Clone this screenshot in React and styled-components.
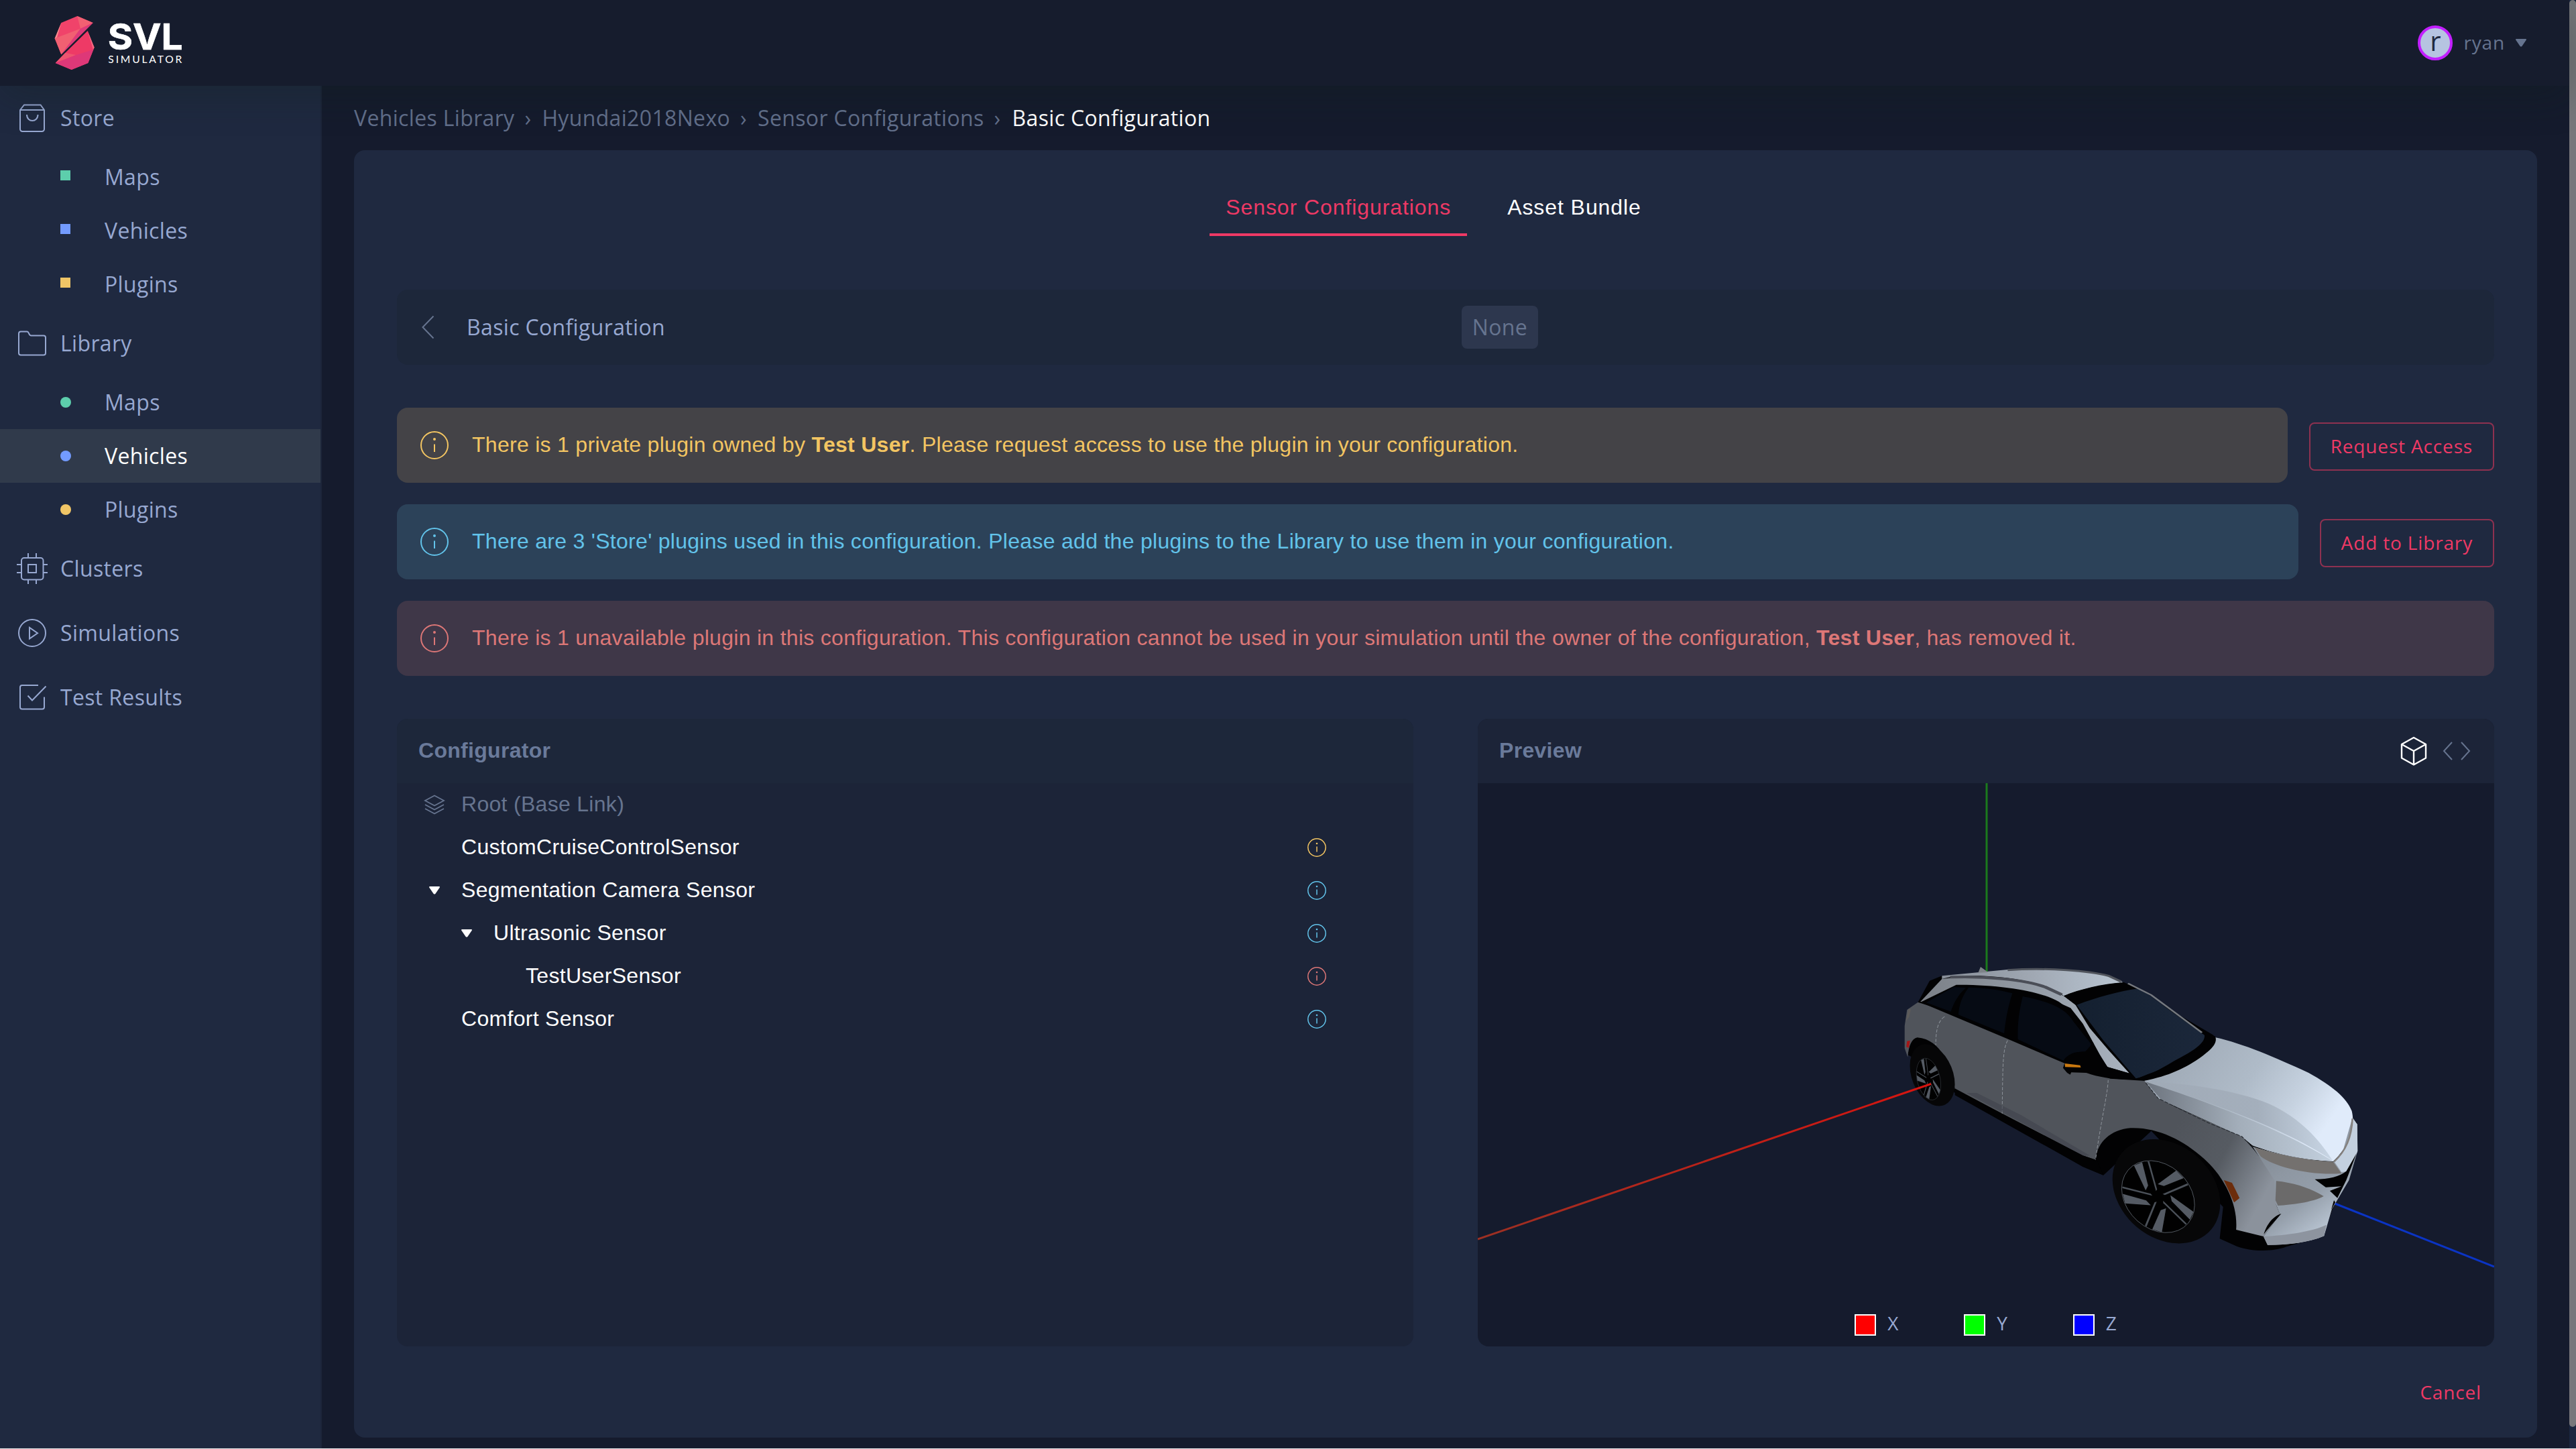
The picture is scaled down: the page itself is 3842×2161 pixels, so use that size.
import React from "react";
import styled, { createGlobalStyle, css } from "styled-components";

const color = {
  page: "#151b2d",
  surface: "#1f2940",
  sunken: "#1c2438",
  bar: "#1d273a",
  text: "#97a8d1",
  muted: "#66748f",
  accent: "#ee3965",
  green: "#5dceac",
  blue: "#739bff",
  yellow: "#f0c566",
  warning: "#f3c562",
  info: "#62c3ea",
  danger: "#dd7777",
};

const sans = `"Open Sans", "Noto Sans", sans-serif`;
const helvetica = `"Liberation Sans", Arial, sans-serif`;

const GlobalStyle = createGlobalStyle`
  *, *::before, *::after { box-sizing: border-box; }
  body {
    margin: 0;
    background: ${color.page};
    color: ${color.text};
    font-family: ${sans};
    font-size: 32px;
    letter-spacing: 0.34px;
    overflow: hidden;
  }
  button {
    font: inherit;
    letter-spacing: inherit;
    color: inherit;
    background: none;
    border: 0;
    padding: 0;
  }
  svg { display: block; flex: none; }
`;

const Window = styled.div`
  display: grid;
  grid-template-columns: 1fr 10px;
  height: 2161px;
  border-bottom: 1px solid #e8e9ec;
`;

const Page = styled.div`
  display: grid;
  grid-template-rows: 128px 1fr;
`;

const Scrollbar = styled.div`
  background: #1b2640;
`;

const Thumb = styled.div`
  height: 2128px;
  border-radius: 5px;
  background: #77777b;
`;

const Header = styled.header`
  position: relative;
  z-index: 1;
  display: flex;
  align-items: center;
  justify-content: space-between;
  padding: 0 64px 0 60px;
  background: #161c2d;
  box-shadow: 0 16px 56px rgba(16, 32, 24, 0.28);
`;

const UserMenu = styled.button`
  display: flex;
  align-items: center;
  gap: 16px;
  font-size: 28px;
  letter-spacing: 0.84px;
  color: ${color.muted};
`;

const UserName = styled.span`
  padding-bottom: 2px;
`;

const Avatar = styled.span`
  display: flex;
  align-items: center;
  justify-content: center;
  width: 52px;
  height: 52px;
  padding-bottom: 7px;
  border: 4px solid #c21fff;
  border-radius: 50%;
  background: #b6c4e1;
  color: #1f2940;
  font-size: 40px;
  letter-spacing: 0;
  line-height: 1;
`;

const Body = styled.div`
  display: grid;
  grid-template-columns: 480px 1fr;
`;

const Sidebar = styled.nav`
  display: flex;
  flex-direction: column;
  background: ${color.surface};
  border-right: 2px solid #1c2539;
`;

const ItemLabel = styled.span`
  padding-bottom: 1px;
`;

const Section = styled.a`
  display: flex;
  align-items: center;
  gap: 18px;
  height: 96px;
  padding-left: 24px;
`;

const SubItem = styled.a`
  display: flex;
  align-items: center;
  gap: 50px;
  height: 80px;
  padding-left: 90px;
  ${(p) =>
    p.$active &&
    css`
      background: #303a4b;
      color: #fff;
    `}
`;

const Bullet = styled.i`
  width: 16px;
  height: 16px;
  background: ${(p) => p.$color};
  ${(p) =>
    p.$round
      ? css`
          border-radius: 50%;
        `
      : css`
          border-right: 1px solid ${color.surface};
          margin-bottom: 5px;
          height: 15px;
        `}
`;

const Main = styled.main`
  padding: 0 48px;
`;

const Breadcrumbs = styled.div`
  display: flex;
  align-items: center;
  height: 96px;
  padding-bottom: 1px;
  color: #626f8b;
`;

const Separator = styled.span`
  margin: 0 16px 0 15px;
`;

const Current = styled.span`
  margin-left: 1px;
  color: #fff;
`;

const Card = styled.section`
  height: 1920px;
  padding: 48px 64px 32px;
  border-radius: 16px;
  background: ${color.surface};
`;

const Tabs = styled.div`
  display: flex;
  justify-content: center;
  font-family: ${helvetica};
  letter-spacing: 0.92px;
`;

const Tab = styled.button`
  height: 80px;
  margin-right: 36px;
  padding: 0 24px 2px;
  line-height: 74px;
  border-bottom: 4px solid ${(p) => (p.$active ? color.accent : "transparent")};
  color: ${(p) => (p.$active ? color.accent : "#fff")};
`;

const TitleBar = styled.div`
  display: grid;
  grid-template-columns: 104px 1fr 1540px;
  align-items: center;
  height: 112px;
  margin-top: 80px;
  border-radius: 16px;
  background: ${color.bar};
`;

const BackButton = styled.button`
  padding-left: 24px;
`;

const Tag = styled.span`
  justify-self: start;
  width: 114px;
  height: 64px;
  border-radius: 8px;
  background: #2d374e;
  color: ${color.muted};
  line-height: 63px;
  text-align: center;
`;

const Alerts = styled.div`
  display: grid;
  gap: 32px;
  margin: 64px 0;
`;

const AlertRow = styled.div`
  display: flex;
  align-items: center;
  gap: 32px;
`;

const tones = {
  warning: { fg: color.warning, bg: "#444347" },
  info: { fg: color.info, bg: "#2c4259" },
  danger: { fg: color.danger, bg: "#3f3748" },
};

const AlertBox = styled.div`
  display: flex;
  flex: 1;
  align-items: center;
  gap: 32px;
  height: 112px;
  padding: 0 32px;
  border-radius: 16px;
  background: ${(p) => tones[p.$tone].bg};
  color: ${(p) => tones[p.$tone].fg};
`;

const AlertText = styled.p`
  margin: 0;
  padding-bottom: 2px;
  font-family: ${helvetica};
  letter-spacing: 0.29px;
`;

const OutlineButton = styled.button`
  height: 72px;
  margin-top: 4px;
  padding: 0 30px 2px;
  border: 2px solid #8e3150;
  border-radius: 8px;
  color: ${color.accent};
  font-size: 28px;
  letter-spacing: 0.84px;
`;

const Columns = styled.div`
  display: grid;
  grid-template-columns: 1fr 1fr;
  gap: 96px;
  height: 936px;
  font-family: ${helvetica};
  letter-spacing: 0.3px;
`;

const Panel = styled.section`
  display: grid;
  grid-template-rows: 96px 1fr;
  min-height: 0;
  border-radius: 16px;
  overflow: hidden;
  background: ${(p) => (p.$deep ? color.page : color.sunken)};
`;

const PanelHeader = styled.header`
  display: flex;
  align-items: center;
  gap: 16px;
  padding: 0 32px;
  background: ${(p) => (p.$deep ? color.sunken : color.bar)};
`;

const PanelTitle = styled.h2`
  flex: 1;
  margin: 0;
  padding-bottom: 2px;
  font-size: 32px;
  font-weight: 700;
  color: #6a7a9a;
`;

const Tree = styled.div`
  display: flex;
  flex-direction: column;
`;

const TreeRow = styled.div`
  display: grid;
  grid-template-columns: 32px 1fr 28px;
  column-gap: 24px;
  align-items: center;
  height: 64px;
  padding: 0 130px 0 ${(p) => 40 + p.$depth * 48}px;
  color: ${(p) => (p.$root ? color.muted : "#fff")};
`;

const NodeName = styled.span`
  padding-bottom: 2px;
`;

const Tinted = styled.span`
  color: ${(p) => tones[p.$tone].fg};
`;

const Viewport = styled.div`
  display: grid;
  grid-template: 840px / 1516px;
`;

const Legend = styled.div`
  grid-area: 1 / 1;
  align-self: end;
  display: flex;
  justify-content: center;
  gap: 97px;
  padding-bottom: 16px;
  font-family: ${sans};
  font-size: 28px;
  letter-spacing: 0.84px;
`;

const Axis = styled.span`
  display: flex;
  align-items: center;
  gap: 17px;
  height: 32px;
`;

const AxisName = styled.span`
  padding-bottom: 6px;
`;

const Swatch = styled.i`
  width: 32px;
  height: 32px;
  border: 2px solid #fff;
  background: ${(p) => p.$color};
`;

const Footer = styled.footer`
  display: flex;
  justify-content: flex-end;
  height: 72px;
  margin-top: 32px;
`;

const TextButton = styled.button`
  padding: 0 19px 1px;
  color: ${color.accent};
  font-size: 28px;
  letter-spacing: 0.84px;
`;

const SceneSvg = styled.svg`
  grid-area: 1 / 1;
`;

function Icon({ size = 48, stroke = 2, children }) {
  return (
    <svg
      width={size}
      height={size}
      viewBox={`0 0 ${size} ${size}`}
      fill="none"
      stroke="currentColor"
      strokeWidth={stroke}
    >
      {children}
    </svg>
  );
}

const BagIcon = () => (
  <Icon>
    <path d="M6 12 12 4.500h24.500L42 12V40.500a3.500 3.500 0 0 1-3.500 3.500H9.500A3.500 3.500 0 0 1 6 40.500ZM6 12H42M16 19c0 12 16.500 12 16.500 0" />
  </Icon>
);

const FolderIcon = () => (
  <Icon>
    <path d="M4 9.500A3 3 0 0 1 7 6.500H16.500C19.500 6.500 18.500 12.500 22.500 12.500H41A3 3 0 0 1 44 15.500V38.500A3 3 0 0 1 41 41.500H7A3 3 0 0 1 4 38.500Z" />
  </Icon>
);

const ChipIcon = () => (
  <Icon>
    <rect x="8" y="8" width="32.500" height="32.500" rx="4" />
    <rect x="18" y="18" width="12" height="12" />
    <path d="M18 8V1M30 8V1M18 41V47M30 41V47M8 18H1M8 30H1M41 18H47M41 30H47" />
  </Icon>
);

const PlayIcon = () => (
  <Icon>
    <circle cx="24" cy="24" r="20" />
    <path d="M20 16V32.500L32 24.250Z" />
  </Icon>
);

const CheckIcon = () => (
  <Icon>
    <path d="M33 6H9A3 3 0 0 0 6 9V38.500A3 3 0 0 0 9 41.500H39A3 3 0 0 0 42 38.500V23.500M17.500 21.500 24 28.500 44.500 7.500" />
  </Icon>
);

const ChevronIcon = () => (
  <Icon>
    <path d="M30.500 7.500 14.500 24 30.500 40.500" stroke={color.muted} />
  </Icon>
);

const InfoIcon = () => (
  <Icon>
    <circle cx="24" cy="24" r="20" />
    <path d="M24 22.500V34" />
    <circle cx="24" cy="15" r="2" fill="currentColor" stroke="none" />
  </Icon>
);

const SmallInfoIcon = () => (
  <Icon size={28} stroke={1.5}>
    <circle cx="14" cy="14" r="13.200" />
    <path d="M14 12.500V20.500" />
    <circle cx="14" cy="8" r="1.300" fill="currentColor" stroke="none" />
  </Icon>
);

const LayersIcon = () => (
  <Icon size={32} stroke={1.8}>
    <path d="M16 2.500 30 10 16 17.500 2 10ZM2 16 16 23.500 30 16M2 22 16 29.500 30 22" />
  </Icon>
);

const ArrowIcon = ({ size = 32 }) => (
  <svg width={size} height={size} viewBox={`${16 - size / 2} ${16 - size / 2} ${size} ${size}`}>
    <path
      d="M9 11H23L16.500 20.500H15.500Z"
      fill="currentColor"
      stroke="currentColor"
      strokeWidth="2"
      strokeLinejoin="round"
    />
  </svg>
);

const CubeIcon = () => (
  <Icon stroke={2.4}>
    <path
      stroke="#fff"
      strokeLinejoin="round"
      d="M24 4 42 14V34.500L24 44.500 6 34.500V14ZM6 14 24 24 42 14M24 24V44.500"
    />
  </Icon>
);

const CodeIcon = () => (
  <Icon>
    <path stroke={color.muted} d="M17 11 5 24 17 37M31 11 43 24 31 37" />
  </Icon>
);

const Logo = () => (
  <svg width="240" height="108" viewBox="0 0 720 324">
    <path fill="#f0436a" d="M94 72 166 42 236 72 94 214 65 142Z" />
    <path fill="#f16072" d="M166 42 236 72 180 98Z" />
    <path fill="#f16072" d="M65 142 180 98 94 214Z" />
    <path fill="#de3a7a" d="M180 98 236 72 94 214Z" />
    <path fill="#f58f8f" d="M94 72 75 137 65 142Z" />
    <path fill="#ee3a66" d="M212 108 242 182 214 252 140 282 68 252 112 206Z" />
    <path fill="#ee5570" d="M112 206 160 216 68 252Z" />
    <path fill="#de3878" d="M68 252 160 216 238 192 214 252 140 282Z" />
    <path fill="#f26b80" d="M212 108 242 182 237 192Z" />
    <text
      x="302"
      y="191"
      fill="#fff"
      stroke="#fff"
      strokeWidth="2"
      fontFamily="Inter, sans-serif"
      fontWeight="700"
      fontSize="162"
      letterSpacing="0"
      textLength="336"
      lengthAdjust="spacingAndGlyphs"
    >
      SVL
    </text>
    <text
      x="304"
      y="251"
      fill="#fff"
      fontFamily="Lato, sans-serif"
      fontSize="47"
      letterSpacing="0"
      textLength="330"
    >
      SIMULATOR
    </text>
  </svg>
);

function Wheel({ cx, cy, rx, ry, tilt, spokes }) {
  return (
    <g transform={`translate(${cx} ${cy}) rotate(${tilt}) scale(${rx / 100} ${ry / 100})`}>
      <circle r="100" fill="#010101" stroke="#5c636c" strokeWidth="1.500" />
      {Array.from({ length: spokes }, (_, i) => (
        <g key={i} transform={`rotate(${(i * 360) / spokes})`}>
          <path d="M-34 -93-8 -98-16 -34-28 -22Z" fill="#555b64" />
          <path d="M8 -98 13 -97 5 -20 0 -16Z" fill="#4b5159" />
        </g>
      ))}
    </g>
  );
}

const Car = () => (
  <g transform="translate(2780 1400) scale(0.5102 0.33333)">
    <path
      fill="#020203"
      d="M158 284 192 188 228 166 420 146 760 196 1020 430 1200 700 1440 820 1410 1060 1370 1210 1340 1332 1235 1378C1190 1404 1130 1398 1090 1376L1040 1342 1050 1200 840 860 700 1058 640 1020 266 690 180 560 128 520Z"
    />
    <path
      fill="url(#side)"
      d="M158 284 272 340 415 440 590 556 720 626 822 636 900 745 1106 884 1140 944 1212 1085 1205 1190 1216 1234 1168 1332 1088 1302C1094 1190 1054 1066 994 984 930 896 850 838 770 848 710 862 680 925 677 990L640 970 266 672C256 580 228 450 156 442 140 446 130 480 128 530L119 490V390L126 318Z"
    />
    <path fill="#5d5b5a" d="M130 314 137 316 132 350 122 370Z" />
    <path fill="#a51616" d="M126 458 135 456 131 488 124 484Z" />
    <path
      fill="url(#pillar)"
      d="M165 282 228 180C330 160 480 176 560 240L584 256 618 295 660 400 716 500 776 602 712 574 690 520 640 380 604 310 560 280C490 235 350 205 270 208L182 286Z"
    />
    <path
      fill="url(#roof)"
      d="M228 166 420 138C540 128 660 140 715 164L758 196C690 206 630 228 584 256 540 200 440 172 340 166 290 164 250 168 228 180Z"
    />
    <path
      fill="none"
      stroke="#4b4e57"
      strokeWidth="12"
      d="M252 172C350 166 470 182 530 216L578 250"
    />
    <path
      fill="none"
      stroke="#50545c"
      strokeWidth="9"
      d="M420 140C540 128 660 144 715 166L752 192"
    />
    <path fill="#7d8288" d="M334 152 341 126 363 150Z" />
    <path fill="#020203" d="M165 284 270 206C400 204 520 236 570 282L612 330 672 470 650 560 584 556 410 442Z" />
    <path fill="#060b14" d="M182 286 262 216 298 220C275 250 262 290 254 326Z" />
    <path fill="#060b14" d="M306 218C350 218 400 230 434 244 422 300 414 360 410 424L276 340C278 290 290 250 306 218Z" />
    <path fill="#060b14" d="M464 258C540 280 590 310 612 370L664 470 656 505C620 505 590 520 584 546L450 450C448 380 454 320 464 258Z" />
    <path fill="#020203" d="M588 548C592 516 618 504 646 506L664 476 712 574 780 604 800 628C740 632 690 622 650 600L606 598 603 608 594 600 582 578Z" />
    <path fill="#c9780f" d="M587 558 632 566 634 576 588 574Z" />
    <path fill="#020203" d="M584 256C630 226 700 200 760 196L805 222 620 298Z" />
    <path fill="url(#glass)" d="M622 296C680 262 745 235 805 222L996 432C996 470 965 500 905 548 860 590 830 612 795 625L700 455Z" />
    <path fill="none" stroke="#75797f" strokeWidth="6" d="M772 200 840 252 988 420" />
    <path fill="#020203" d="M996 428 1026 436C1040 470 990 530 930 580 890 608 850 630 795 628L830 606C900 570 960 520 996 470Z" />
    <path
      fill="url(#hood)"
      d="M820 635C890 614 940 580 990 524 1020 490 1032 465 1028 442 1110 470 1200 530 1300 600 1370 660 1410 710 1426 770 1436 830 1424 920 1372 996 1270 990 1190 955 1136 925L1104 884 860 714Z"
    />
    <path fill="url(#crease)" d="M824 640C960 645 1120 690 1200 750 1290 820 1340 920 1370 992 1260 880 1110 780 824 640Z" />
    <path fill="url(#fender)" d="M824 640C960 710 1200 830 1370 994 1270 990 1190 955 1136 925L1104 884 870 722Z" />
    <path fill="none" stroke="#23272d" strokeWidth="2.500" strokeDasharray="12 5" d="M824 645 860 714 910 752 1010 826 1104 884 1136 932" />
    <path
      fill="url(#bumper)"
      d="M1136 930C1200 960 1290 992 1372 998L1400 950 1428 800 1442 830 1443 950 1418 1080 1368 1210 1345 1330C1300 1360 1240 1370 1180 1370L1168 1332 1216 1234 1205 1190 1200 1080Z"
    />
    <path fill="#c3d0df" d="M1428 800 1442 830 1443 950 1418 1040 1396 1044 1376 1000C1410 950 1426 880 1428 800Z" />
    <path fill="none" stroke="#85817e" strokeWidth="5" d="M1428 805C1426 880 1410 950 1374 998" />
    <path fill="#74716f" d="M1142 934C1210 966 1300 994 1372 998L1396 1050C1300 1060 1200 1020 1160 974Z" />
    <path fill="#6b6a6a" d="M1205 1084C1260 1092 1310 1120 1344 1152 1310 1180 1250 1190 1210 1194L1203 1170Z" />
    <path fill="#020203" d="M1318 1076C1360 1076 1390 1064 1410 1040L1440 960 1410 1080 1384 1160 1362 1128 1396 1108 1350 1112Z" />
    <path fill="#8d949f" d="M1168 1332C1240 1326 1310 1310 1352 1280L1345 1330C1300 1360 1240 1370 1180 1370Z" />
    <path fill="#020203" d="M1169 1322C1175 1290 1190 1245 1220 1230L1176 1308ZM1366 1212 1374 1170 1378 1180Z" />
    <path fill="#6c2d0c" d="M1052 1080 1076 1092 1098 1160 1082 1180Z" />
    <g fill="none" stroke="#8c9299" strokeWidth="2" strokeDasharray="14 7">
      <path d="M420 455C405 500 406 560 404 790M714 632C712 700 692 820 677 990M236 348C214 370 210 420 210 475" />
    </g>
    <path fill="#3f434c" d="M300 690H330L460 790 660 970 640 972Z" opacity="0.6" />
    <path fill="#020203" d="M266 670 400 780 640 970 680 990 700 1058 640 1020 266 700Z" />
    <ellipse cx="200" cy="610" rx="62" ry="140" transform="rotate(-10 200 610)" fill="#060607" />
    <Wheel cx={189} cy={628} rx={34} ry={94} tilt={-7} spokes={5} />
    <ellipse cx="884" cy="1130" rx="150" ry="238" transform="rotate(-15 884 1130)" fill="#070708" />
    <Wheel cx={860} cy={1154} rx={102} ry={164} tilt={-14} spokes={5} />
  </g>
);

const Scene = () => (
  <SceneSvg width="1516" height="840" viewBox="2204 1168 1516 840">
    <defs>
      <linearGradient id="axisX">
        <stop offset="0" stopColor="#9c3023" />
        <stop offset="1" stopColor="#d8140f" />
      </linearGradient>
      <linearGradient id="side" x1="0.700" x2="1" y1="0.600" y2="0.700">
        <stop offset="0" stopColor="#50545b" />
        <stop offset="0.500" stopColor="#565b62" />
        <stop offset="1" stopColor="#8b929c" />
      </linearGradient>
      <linearGradient id="pillar">
        <stop offset="0" stopColor="#7b8087" />
        <stop offset="1" stopColor="#a9b3bf" />
      </linearGradient>
      <linearGradient id="roof">
        <stop offset="0" stopColor="#878e98" />
        <stop offset="0.500" stopColor="#a0a8b3" />
        <stop offset="1" stopColor="#b9c5d2" />
      </linearGradient>
      <linearGradient id="glass">
        <stop offset="0" stopColor="#142030" />
        <stop offset="1" stopColor="#1b273a" />
      </linearGradient>
      <linearGradient id="hood" y2="0.400">
        <stop offset="0" stopColor="#99a3af" />
        <stop offset="0.550" stopColor="#afbbc8" />
        <stop offset="0.800" stopColor="#c6d2e0" />
        <stop offset="1" stopColor="#e0ebfa" />
      </linearGradient>
      <linearGradient id="crease">
        <stop offset="0" stopColor="#a0aab6" />
        <stop offset="0.600" stopColor="#a4afbc" />
        <stop offset="1" stopColor="#c9d6e5" />
      </linearGradient>
      <linearGradient id="fender">
        <stop offset="0" stopColor="#6d747e" />
        <stop offset="0.500" stopColor="#a3aeba" />
        <stop offset="1" stopColor="#c2cfdd" />
      </linearGradient>
      <linearGradient id="bumper" x1="0" x2="0.600" y1="0" y2="1">
        <stop offset="0" stopColor="#757c85" />
        <stop offset="0.450" stopColor="#8e97a2" />
        <stop offset="0.700" stopColor="#949eaa" />
        <stop offset="1" stopColor="#c0ccda" />
      </linearGradient>
    </defs>
    <path d="M2963 1168V1452" stroke="#1b7a1d" strokeWidth="3" />
    <path d="M3480 1794 3720 1889" stroke="#0b34c4" strokeWidth="3" />
    <Car />
    <path d="M2204 1848 2880 1616.500" stroke="url(#axisX)" strokeWidth="3" />
  </SceneSvg>
);

const subItems = [
  ["Maps", color.green],
  ["Vehicles", color.blue],
  ["Plugins", color.yellow],
];

const nodes = [
  { name: "CustomCruiseControlSensor", depth: 0, tone: "warning" },
  { name: "Segmentation Camera Sensor", depth: 0, tone: "info", open: true },
  { name: "Ultrasonic Sensor", depth: 1, tone: "info", open: true },
  { name: "TestUserSensor", depth: 2, tone: "danger" },
  { name: "Comfort Sensor", depth: 0, tone: "info" },
];

function Alert({ tone, action, children }) {
  return (
    <AlertRow>
      <AlertBox $tone={tone}>
        <InfoIcon />
        <AlertText>{children}</AlertText>
      </AlertBox>
      {action && <OutlineButton>{action}</OutlineButton>}
    </AlertRow>
  );
}

export default function App() {
  return (
    <Window>
      <GlobalStyle />
      <Page>
        <Header>
          <Logo />
          <UserMenu>
            <Avatar>r</Avatar>
            <UserName>ryan</UserName>
            <ArrowIcon size={16} />
          </UserMenu>
        </Header>
        <Body>
          <Sidebar>
            <Section>
              <BagIcon />
              <ItemLabel>Store</ItemLabel>
            </Section>
            {subItems.map(([name, tint]) => (
              <SubItem key={name}>
                <Bullet $color={tint} />
                <ItemLabel>{name}</ItemLabel>
              </SubItem>
            ))}
            <Section>
              <FolderIcon />
              <ItemLabel>Library</ItemLabel>
            </Section>
            {subItems.map(([name, tint]) => (
              <SubItem key={name} $active={name === "Vehicles"}>
                <Bullet $round $color={tint} />
                <ItemLabel>{name}</ItemLabel>
              </SubItem>
            ))}
            <Section>
              <ChipIcon />
              <ItemLabel>Clusters</ItemLabel>
            </Section>
            <Section>
              <PlayIcon />
              <ItemLabel>Simulations</ItemLabel>
            </Section>
            <Section>
              <CheckIcon />
              <ItemLabel>Test Results</ItemLabel>
            </Section>
          </Sidebar>
          <Main>
            <Breadcrumbs>
              <span>Vehicles Library</span>
              <Separator>›</Separator>
              <span>Hyundai2018Nexo</span>
              <Separator>›</Separator>
              <span>Sensor Configurations</span>
              <Separator>›</Separator>
              <Current>Basic Configuration</Current>
            </Breadcrumbs>
            <Card>
              <Tabs>
                <Tab $active>Sensor Configurations</Tab>
                <Tab>Asset Bundle</Tab>
              </Tabs>
              <TitleBar>
                <BackButton>
                  <ChevronIcon />
                </BackButton>
                <ItemLabel>Basic Configuration</ItemLabel>
                <Tag>None</Tag>
              </TitleBar>
              <Alerts>
                <Alert tone="warning" action="Request Access">
                  There is 1 private plugin owned by <b>Test User</b>. Please request access to use
                  the plugin in your configuration.
                </Alert>
                <Alert tone="info" action="Add to Library">
                  There are 3 'Store' plugins used in this configuration. Please add the plugins to
                  the Library to use them in your configuration.
                </Alert>
                <Alert tone="danger">
                  There is 1 unavailable plugin in this configuration. This configuration cannot be
                  used in your simulation until the owner of the configuration, <b>Test User</b>,
                  has removed it.
                </Alert>
              </Alerts>
              <Columns>
                <Panel>
                  <PanelHeader>
                    <PanelTitle>Configurator</PanelTitle>
                  </PanelHeader>
                  <Tree>
                    <TreeRow $root $depth={0}>
                      <LayersIcon />
                      <NodeName>Root (Base Link)</NodeName>
                    </TreeRow>
                    {nodes.map((node) => (
                      <TreeRow key={node.name} $depth={node.depth}>
                        {node.open ? <ArrowIcon /> : <span />}
                        <NodeName>{node.name}</NodeName>
                        <Tinted $tone={node.tone}>
                          <SmallInfoIcon />
                        </Tinted>
                      </TreeRow>
                    ))}
                  </Tree>
                </Panel>
                <Panel $deep>
                  <PanelHeader $deep>
                    <PanelTitle>Preview</PanelTitle>
                    <CubeIcon />
                    <CodeIcon />
                  </PanelHeader>
                  <Viewport>
                    <Scene />
                    <Legend>
                      <Axis>
                        <Swatch $color="#f00" />
                        <AxisName>X</AxisName>
                      </Axis>
                      <Axis>
                        <Swatch $color="#0f0" />
                        <AxisName>Y</AxisName>
                      </Axis>
                      <Axis>
                        <Swatch $color="#00f" />
                        <AxisName>Z</AxisName>
                      </Axis>
                    </Legend>
                  </Viewport>
                </Panel>
              </Columns>
              <Footer>
                <TextButton>Cancel</TextButton>
              </Footer>
            </Card>
          </Main>
        </Body>
      </Page>
      <Scrollbar>
        <Thumb />
      </Scrollbar>
    </Window>
  );
}
